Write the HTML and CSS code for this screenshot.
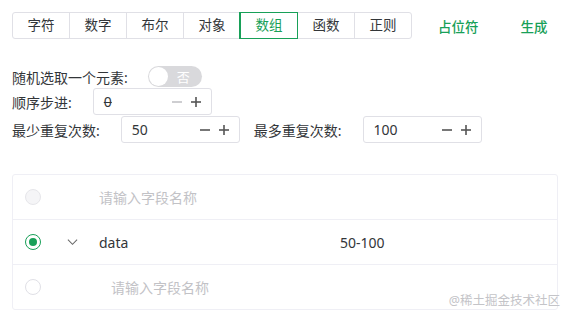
FILE: index.html
```html
<!DOCTYPE html>
<html lang="zh-CN">
<head>
  <meta charset="UTF-8">
  <title>Mock 生成器</title>
  <link rel="stylesheet" href="styles.css">
</head>
<body>
  <div class="page">
    <div class="toolbar">
      <div class="type-group">
        <button class="type-btn">字符</button>
        <button class="type-btn">数字</button>
        <button class="type-btn">布尔</button>
        <button class="type-btn">对象</button>
        <button class="type-btn active">数组</button>
        <button class="type-btn">函数</button>
        <button class="type-btn">正则</button>
      </div>
      <button class="text-btn first">占位符</button>
      <button class="text-btn">生成</button>
    </div>

    <div class="form">
      <div class="form-row short">
        <span class="label">随机选取一个元素:</span>
        <span class="switch">
          <span class="switch-knob"></span>
          <span class="switch-text">否</span>
        </span>
      </div>
      <div class="form-row">
        <span class="label">顺序步进:</span>
        <div class="num-input">
          <span class="num-value zero">0</span>
          <span class="num-btn disabled">
            <svg viewBox="0 0 12 12"><line x1="1" y1="6" x2="11" y2="6"></line></svg>
          </span>
          <span class="num-btn">
            <svg viewBox="0 0 12 12"><line x1="1" y1="6" x2="11" y2="6"></line><line x1="6" y1="1" x2="6" y2="11"></line></svg>
          </span>
        </div>
      </div>
      <div class="form-row">
        <span class="label">最少重复次数:</span>
        <div class="num-input">
          <span class="num-value">50</span>
          <span class="num-btn">
            <svg viewBox="0 0 12 12"><line x1="1" y1="6" x2="11" y2="6"></line></svg>
          </span>
          <span class="num-btn">
            <svg viewBox="0 0 12 12"><line x1="1" y1="6" x2="11" y2="6"></line><line x1="6" y1="1" x2="6" y2="11"></line></svg>
          </span>
        </div>
        <span class="label second">最多重复次数:</span>
        <div class="num-input">
          <span class="num-value">100</span>
          <span class="num-btn">
            <svg viewBox="0 0 12 12"><line x1="1" y1="6" x2="11" y2="6"></line></svg>
          </span>
          <span class="num-btn">
            <svg viewBox="0 0 12 12"><line x1="1" y1="6" x2="11" y2="6"></line><line x1="6" y1="1" x2="6" y2="11"></line></svg>
          </span>
        </div>
      </div>
    </div>

    <div class="tree">
      <div class="tree-row">
        <span class="radio disabled"></span>
        <span class="arrow"></span>
        <span class="field placeholder">请输入字段名称</span>
      </div>
      <div class="tree-row">
        <span class="radio checked"></span>
        <span class="arrow">
          <svg viewBox="0 0 12 8"><polyline points="1,1.5 6,6.5 11,1.5"></polyline></svg>
        </span>
        <span class="field">data</span>
        <span class="range">50-100</span>
      </div>
      <div class="tree-row">
        <span class="radio"></span>
        <span class="arrow"></span>
        <span class="field placeholder child">请输入字段名称</span>
      </div>
    </div>
  </div>

  <div class="watermark">@稀土掘金技术社区</div>
</body>
</html>
```

FILE: styles.css
```css
* {
  box-sizing: border-box;
  margin: 0;
  padding: 0;
}

body {
  width: 570px;
  height: 318px;
  position: relative;
  font-family: "Noto Sans", "Noto Sans CJK SC", sans-serif;
  font-size: 14px;
  color: #333639;
  background-color: #fff;
  overflow: hidden;
}

.page {
  padding: 12px;
}

button {
  font-family: inherit;
  font-size: inherit;
  color: inherit;
  background: none;
  border: none;
  cursor: pointer;
}

.toolbar {
  display: flex;
  align-items: center;
  height: 27px;
}

.type-group {
  display: flex;
  flex-shrink: 0;
  height: 27px;
  border: 1px solid #e0e0e6;
  border-radius: 3px;
}

.type-btn {
  width: 57px;
  height: 100%;
  border-left: 1px solid #e0e0e6;
  line-height: 25px;
  font-size: 13.5px;
}

.type-btn:first-child {
  width: 56px;
  border-left: none;
}

.type-btn.active {
  color: #18a058;
  box-shadow: 0 0 0 1px #18a058;
  border-left-color: #18a058;
  position: relative;
}

.text-btn {
  flex-shrink: 0;
  white-space: nowrap;
  color: #18a058;
  padding: 0 12px;
  height: 27px;
  margin-left: 18px;
  font-size: 13.5px;
  font-weight: 500;
}

.text-btn.first {
  margin-left: 14px;
}

.form {
  margin-top: 27px;
  display: flex;
  flex-direction: column;
  gap: 1px;
}

.form-row {
  display: flex;
  align-items: center;
  height: 27px;
}

.form-row.short {
  height: 21px;
}

.label {
  margin-right: 21px;
  white-space: nowrap;
}

.label.second {
  margin-left: 14px;
}

.switch {
  position: relative;
  display: flex;
  align-items: center;
  width: 54px;
  height: 21px;
  border-radius: 11px;
  background-color: #d9d9dc;
  margin-left: -1px;
}

.switch-knob {
  width: 19px;
  height: 19px;
  margin-left: 1px;
  border-radius: 50%;
  background-color: #fff;
}

.switch-text {
  margin-left: 9px;
  color: #fff;
  font-size: 13px;
}

.num-input {
  display: flex;
  align-items: center;
  width: 119px;
  height: 27px;
  border: 1px solid #e0e0e6;
  border-radius: 3px;
  padding: 0 9px 0 10px;
}

.num-value {
  flex: 1;
}

.num-value.zero {
  text-decoration: line-through;
  text-decoration-thickness: 1px;
}

.num-btn {
  display: flex;
  width: 12px;
  height: 12px;
  margin-left: 7px;
  color: #555;
}

.num-btn.disabled {
  color: #c2c2c6;
}

.num-btn svg {
  width: 12px;
  height: 12px;
  stroke: currentColor;
  stroke-width: 1.6;
}

.tree {
  margin-top: 31px;
  border: 1px solid #efeff5;
  border-radius: 3px;
}

.tree-row {
  display: flex;
  align-items: center;
  height: 45px;
  padding-left: 12px;
  border-top: 1px solid #efeff5;
}

.tree-row:first-child {
  border-top: none;
  height: 44px;
}

.radio {
  width: 16px;
  height: 16px;
  border-radius: 50%;
  border: 1px solid #e0e0e6;
  background-color: #fff;
  display: flex;
  align-items: center;
  justify-content: center;
}

.radio.disabled {
  background-color: #f5f5f7;
  border-color: #e6e6ea;
}

.radio.checked {
  border-color: #18a058;
}

.radio.checked::after {
  content: "";
  width: 8px;
  height: 8px;
  border-radius: 50%;
  background-color: #18a058;
}

.arrow {
  display: flex;
  align-items: center;
  justify-content: center;
  width: 12px;
  margin-left: 25px;
  margin-right: 21px;
  color: #666;
}

.arrow svg {
  width: 11px;
  height: 8px;
  fill: none;
  stroke: currentColor;
  stroke-width: 1.1;
}

.field {
  width: 241px;
}

.field.placeholder {
  color: #c2c2c6;
}

.field.child {
  padding-left: 12px;
}

.watermark {
  position: absolute;
  right: 10px;
  bottom: 9px;
  font-size: 12.5px;
  color: #c4c4c8;
}
```
